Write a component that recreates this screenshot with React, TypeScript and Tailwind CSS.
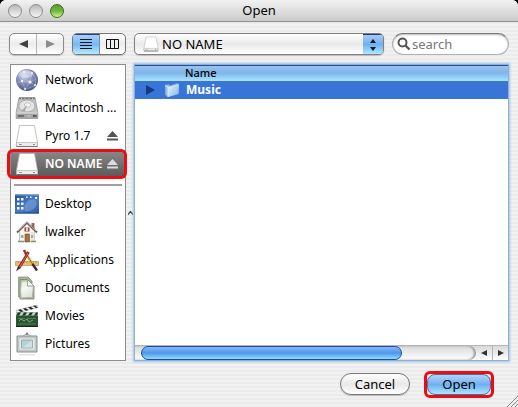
import { useState } from "react";
import type { ReactNode } from "react";

type Place = {
  name: string;
  icon: ReactNode;
  ejectable?: boolean;
};

const NetworkIcon = () => (
  <svg className="size-6 shrink-0" viewBox="0 0 24 24" aria-hidden="true">
    <defs>
      <radialGradient id="globe" cx="0.4" cy="0.3" r="0.8">
        <stop offset="0" stopColor="#c3cbe6" />
        <stop offset="0.45" stopColor="#8590b8" />
        <stop offset="1" stopColor="#3d4870" />
      </radialGradient>
    </defs>
    <circle cx="12" cy="12" r="11" fill="url(#globe)" />
    <g fill="none" stroke="#dfe5f8" strokeWidth="0.6" opacity="0.5">
      <path d="M3 7 L9 4 L17 5 L21 11 L15 14 L7 13 L3 7 L15 14 L17 5 M9 4 L7 13 L10 21 L15 14 L20 18 M7 13 L2 15 M21 11 L20 18 L10 21" />
    </g>
    <g fill="#ffffff" opacity="0.85">
      <circle cx="9" cy="4" r="1" />
      <circle cx="17" cy="5" r="1" />
      <circle cx="7" cy="13" r="1.2" />
      <circle cx="15" cy="14" r="1.6" />
      <circle cx="10" cy="21" r="1" />
      <circle cx="20" cy="17" r="1" />
    </g>
    <ellipse cx="11" cy="6" rx="7" ry="4" fill="#ffffff" opacity="0.4" />
  </svg>
);

const HardDiskIcon = () => (
  <svg className="size-6 shrink-0" viewBox="0 0 24 24" aria-hidden="true">
    <path d="M4 1.5 H20 L22.8 16 V22.5 H1.2 V16 Z" fill="#c4c4c4" stroke="#8c8c8c" strokeWidth="0.7" />
    <path d="M4.5 1.8 H19.5 L19.8 3.2 H4.2 Z" fill="#707070" />
    <path d="M6.5 2 V3.2 M10 2 V3.2 M14 2 V3.2 M17.5 2 V3.2" stroke="#cccccc" />
    <ellipse cx="12" cy="10" rx="8" ry="6" fill="#e4e4e4" stroke="#9c9c9c" strokeWidth="0.7" />
    <ellipse cx="12.5" cy="9" rx="3.2" ry="2.2" fill="#f5f5f5" stroke="#aaaaaa" strokeWidth="0.6" />
    <path d="M6 15 L12 9 L10 15.5 Z" fill="#acacac" />
    <path d="M1.2 16.5 H22.8 V22.5 H1.2 Z" fill="#a3a3a3" />
    <path d="M1.5 17 H22.5" stroke="#eeeeee" />
    <path d="M3 20 H9" stroke="#5d5d5d" strokeWidth="1.5" />
    <path d="M12 20 H16" stroke="#c9c9c9" />
    <path d="M18 19 H21.5 V21 H18 Z" fill="#5c5c5c" />
  </svg>
);

const DriveIcon = ({ className = "size-6" }: { className?: string }) => (
  <svg className={`${className} shrink-0`} viewBox="0 0 24 24" aria-hidden="true">
    <path d="M4.5 1.5 H19.5 L22.5 18.5 V22.5 H1.5 V18.5 Z" fill="#ffffff" stroke="#b4b4b4" strokeWidth="0.8" />
    <path d="M1.5 18.5 H22.5 V22.5 H1.5 Z" fill="#ededed" stroke="#aaaaaa" strokeWidth="0.6" />
    <path d="M1.5 22.5 H22.5" stroke="#777777" />
    <path d="M4 20.5 H7" stroke="#999999" />
    <path d="M18 20.5 H20" stroke="#888888" />
  </svg>
);

const DesktopIcon = () => (
  <svg className="size-6 shrink-0" viewBox="0 0 24 24" aria-hidden="true">
    <defs>
      <linearGradient id="desk" x1="0" y1="0" x2="1" y2="1">
        <stop offset="0" stopColor="#244f9c" />
        <stop offset="0.55" stopColor="#4d7fc0" />
        <stop offset="1" stopColor="#2c5aa4" />
      </linearGradient>
    </defs>
    <path d="M0 2.5 H24 V21.5 H0 Z" fill="url(#desk)" />
    <path d="M10 18 C8 11 14 6 20 8 C23 10 22 16 17 18 C14 19 11 20 10 18 Z" fill="#7ba4d8" opacity="0.55" />
    <path d="M0 3 H24" stroke="#6f93c8" />
    <path d="M0 21 H24" stroke="#234785" />
    <path
      d="M2 6h2.500v2.500H2z M6 6h2.500v2.500H6z M2 10.500h2.500v2.500H2z M6 10.500h2.500v2.500H6z M2 15h2.500v2.500H2z M6 15h2.500v2.500H6z M11 4.500h1.500v1.500h-1.500z M15 4.500h1.500v1.500h-1.500z M20 5h2v2h-2z"
      fill="#edf4ff"
    />
  </svg>
);

const HomeIcon = () => (
  <svg className="size-6 shrink-0" viewBox="0 0 24 24" aria-hidden="true">
    <path d="M16.5 3 H19.5 V10 H16.5 Z" fill="#a2644f" />
    <path d="M4.5 11 L12 4 L19.5 11 V21.5 H4.5 Z" fill="#faf7f0" stroke="#b3a999" strokeWidth="0.7" />
    <path d="M15.5 12 H19.5 V21.5 H15.5 Z" fill="#ebe4d8" />
    <path d="M2 12.5 L12 2.5 L22 12.5" fill="none" stroke="#6d625b" strokeWidth="1.8" />
    <path d="M3 11 L12 2 L21 11" fill="none" stroke="#c9bfb2" strokeWidth="0.7" />
    <path d="M9.5 7.5 H14.5 V11.5 H9.5 Z" fill="#a83a32" />
    <path d="M11 8 H13 V11 H11 Z" fill="#d9dce6" />
    <path d="M10 14 H14.5 V22 H10 Z" fill="#a07545" stroke="#765331" strokeWidth="0.6" />
    <path d="M5.8 15 H8.5 V18 H5.8 Z M16 15 H18.2 V18 H16 Z" fill="#a5a7ae" />
    <path d="M3 21.5 H9 M16 21.5 H21" stroke="#7d946c" strokeWidth="1.3" />
  </svg>
);

const ApplicationsIcon = () => (
  <svg className="size-6 shrink-0" viewBox="0 0 24 24" aria-hidden="true">
    <path d="M0.5 13.5 H23.5 V17.5 H0.5 Z" fill="#e2bd78" stroke="#b18a4c" strokeWidth="0.6" />
    <path d="M3 13.5 V15 M6 13.5 V15 M9 13.5 V15 M12 13.5 V15 M15 13.5 V15 M18 13.5 V15 M21 13.5 V15" stroke="#93703c" strokeWidth="0.6" />
    <path d="M9 2 L11.500 7" stroke="#b52f2a" strokeWidth="2.6" />
    <path d="M11 6.500 L19 18" stroke="#e3b23c" strokeWidth="2.4" />
    <path d="M12 7 L19.5 19" stroke="#a3522b" strokeWidth="0.8" />
    <path d="M17.5 16 L22 22.5" stroke="#35302d" strokeWidth="2.4" />
    <path d="M13.5 4 L4 20" stroke="#8c2721" strokeWidth="2.8" />
    <path d="M13 5 L4.5 19.5" stroke="#dd6656" />
    <path d="M3 18 L1 23.5 L5.5 20 Z" fill="#493228" />
  </svg>
);

const DocumentsIcon = () => (
  <svg className="size-6 shrink-0" viewBox="0 0 24 24" aria-hidden="true">
    <defs>
      <linearGradient id="doc" x1="0" y1="0" x2="0.4" y2="1">
        <stop offset="0" stopColor="#a5b891" />
        <stop offset="0.5" stopColor="#edf0ea" />
        <stop offset="1" stopColor="#a9b59e" />
      </linearGradient>
    </defs>
    <path d="M3.5 1 H13 L17 5 V21 H3.5 Z" fill="#a5b790" stroke="#88967c" strokeWidth="0.8" />
    <path d="M5 3.5 H12.5 L19 10 V23 H5 Z" fill="url(#doc)" stroke="#7f8978" strokeWidth="0.9" />
    <path d="M7 6 H12 V11 H17 V21 H7 Z" fill="#ffffff" opacity="0.6" />
    <path d="M12.5 3.5 V10 H19 Z" fill="#fdfdfd" stroke="#8a9483" strokeWidth="0.8" />
  </svg>
);

const MoviesIcon = () => (
  <svg className="size-6 shrink-0" viewBox="0 0 24 24" aria-hidden="true">
    <path d="M1 6.5 L22 1 L23 3.5 L2 9 Z" fill="#f3f3f3" stroke="#777777" strokeWidth="0.4" />
    <path d="M3 6 L6 8 L8.500 7.300 L5.500 5.300 Z M8 4.700 L11 6.700 L13.500 6 L10.500 4 Z M13 3.400 L16 5.400 L18.500 4.700 L15.500 2.700 Z M18 2.100 L21 4 L23 3.500 L20 1.500 Z" fill="#222222" />
    <path d="M1 8.5 H23 V23 H1 Z" fill="#285330" />
    <path d="M1 8.5 H23 V11.5 H1 Z" fill="#c9d8c6" />
    <path d="M3 8.5 H6 L4 11.5 H1 Z M9 8.5 H12 L10 11.5 H7 Z M15 8.5 H18 L16 11.5 H13 Z M21 8.5 H23 L22 11.5 H19 Z" fill="#17331b" />
    <path d="M3 14.5 H10 M12 14.5 H21 M3 20 H21" stroke="#5d8a58" strokeWidth="0.8" />
    <path d="M4 17 L6 15 L9 17 L12 15 L14 18 L18 16" fill="none" stroke="#8fb083" strokeWidth="0.9" />
    <path d="M1 22.5 H23" stroke="#0d2a12" />
  </svg>
);

const PicturesIcon = () => (
  <svg className="size-6 shrink-0" viewBox="0 0 24 24" aria-hidden="true">
    <path d="M8 4 L12 1.5 L16 4" fill="none" stroke="#aaaaaa" />
    <circle cx="12" cy="1.8" r="1.2" fill="#808080" />
    <path d="M2 4 H22 V20 H2 Z" fill="#c9cccb" stroke="#8a8e8d" />
    <path d="M4 6 H20 V18 H4 Z" fill="#e9ebea" stroke="#b2b5b4" strokeWidth="0.6" />
    <path d="M6.5 8 H17.5 V16 H6.5 Z" fill="#b3d3d7" stroke="#869fa2" strokeWidth="0.8" />
    <path d="M7 15.5 L17 8.5 V15.5 Z" fill="#cbe3e5" />
    <path d="M4 22.8 H20" stroke="#d8d8d8" />
  </svg>
);

const FolderIcon = () => (
  <svg className="size-4 shrink-0" viewBox="0 0 16 16" aria-hidden="true">
    <defs>
      <linearGradient id="folder" x1="0" y1="0" x2="1" y2="1">
        <stop offset="0" stopColor="#eaf6ff" />
        <stop offset="1" stopColor="#7eb4e4" />
      </linearGradient>
    </defs>
    <path d="M1 3 L5 2 L6 3.5 L13 1 L15 2 V12 L4 15 L1 13 Z" fill="#8dbce6" stroke="#507fb4" strokeWidth="0.6" />
    <path d="M4 5 L15 2 L14 12 L4 15 Z" fill="url(#folder)" />
    <path d="M1 3.5 L4 5 V15" fill="none" stroke="#e8f5ff" strokeWidth="0.8" />
  </svg>
);

const EjectIcon = () => (
  <svg className="h-[10px] w-[11px]" viewBox="0 0 11 10" fill="currentColor" aria-hidden="true">
    <path d="M5.5 0 L11 6 H0 Z M0 7.5 H11 V9.5 H0 Z" />
  </svg>
);

const volumes: Place[] = [
  { name: "Network", icon: <NetworkIcon /> },
  { name: "Macintosh ...", icon: <HardDiskIcon /> },
  { name: "Pyro 1.7", icon: <DriveIcon />, ejectable: true },
  { name: "NO NAME", icon: <DriveIcon />, ejectable: true },
];

const folders: Place[] = [
  { name: "Desktop", icon: <DesktopIcon /> },
  { name: "lwalker", icon: <HomeIcon /> },
  { name: "Applications", icon: <ApplicationsIcon /> },
  { name: "Documents", icon: <DocumentsIcon /> },
  { name: "Movies", icon: <MoviesIcon /> },
  { name: "Pictures", icon: <PicturesIcon /> },
];

type PlaceRowProps = {
  place: Place;
  selected: boolean;
  onSelect: (name: string) => void;
};

const PlaceRow = ({ place, selected, onSelect }: PlaceRowProps) => (
  <li
    className={
      selected
        ? "relative flex h-7 items-center bg-linear-to-b from-[#8a8a8a] to-[#585858] font-semibold text-white"
        : "relative flex h-7 items-center text-black"
    }
  >
    <button
      type="button"
      onClick={() => onSelect(place.name)}
      className="flex min-w-0 flex-1 items-center gap-[6px] pl-1 text-left whitespace-nowrap"
    >
      {place.icon}
      {place.name}
    </button>
    {place.ejectable && (
      <button
        type="button"
        aria-label={`Eject ${place.name}`}
        className={selected ? "absolute right-[7px] text-[#dddddd]" : "absolute right-[7px] text-[#555555]"}
      >
        <EjectIcon />
      </button>
    )}
    {selected && <span className="pointer-events-none absolute -inset-y-px -right-[2px] -left-1 rounded-md border-3 border-[#ec0c14]" />}
  </li>
);

const TitleBar = () => (
  <header className="relative flex h-[22px] shrink-0 items-center justify-center border-b border-[#8e8e8e] bg-linear-to-b from-[#f2f2f2] to-[#cbcbcb]">
    <div className="absolute left-2 flex gap-[7px]">
      <button type="button" aria-label="Close" className="size-[14px] rounded-full border border-[#8c8c8c] bg-linear-to-b from-[#b9b9b9] to-[#f6f6f6]" />
      <button type="button" aria-label="Minimize" className="size-[14px] rounded-full border border-[#8c8c8c] bg-linear-to-b from-[#b9b9b9] to-[#f6f6f6]" />
      <button type="button" aria-label="Zoom" className="size-[14px] rounded-full border border-[#3d6a20] bg-linear-to-b from-[#5d9a34] via-[#71b83a] to-[#c9f58c]" />
    </div>
    <h1 className="text-[13px]">Open</h1>
  </header>
);

const Toolbar = () => (
  <div className="flex h-[22px] shrink-0 items-stretch gap-2">
    <div className="flex w-[55px] rounded-[5px] border border-[#8b8b8b] bg-linear-to-b from-white via-[#ececec] to-white shadow-[0_1px_1px_#bbbbbb]">
      <button type="button" aria-label="Back" className="flex flex-1 items-center justify-center border-r border-[#b5b5b5]">
        <svg className="h-2 w-[9px]" viewBox="0 0 9 8" aria-hidden="true">
          <path d="M0 4 L9 0 V8 Z" fill="#404040" />
        </svg>
      </button>
      <button type="button" aria-label="Forward" className="flex flex-1 items-center justify-center">
        <svg className="h-2 w-[9px]" viewBox="0 0 9 8" aria-hidden="true">
          <path d="M9 4 L0 0 V8 Z" fill="#8c8c8c" />
        </svg>
      </button>
    </div>
    <div className="flex w-[54px] overflow-hidden rounded-[5px] border border-[#777777] bg-linear-to-b from-white via-[#ececec] to-white shadow-[0_1px_1px_#bbbbbb]">
      <button type="button" aria-label="List view" className="flex flex-1 items-center justify-center border-t border-r border-t-[#2c3b85] border-r-[#6f8fb8] bg-linear-to-b from-[#a8cdf5] via-[#7bb9f3] to-[#b6ecff]">
        <svg className="h-[11px] w-3" viewBox="0 0 12 11" aria-hidden="true">
          <path d="M0 0.5 H12 M0 3.5 H12 M0 6.5 H12 M0 9.5 H12" stroke="#101828" />
        </svg>
      </button>
      <button type="button" aria-label="Column view" className="flex flex-1 items-center justify-center">
        <svg className="h-[11px] w-[13px]" viewBox="0 0 13 11" aria-hidden="true">
          <path d="M0.5 0.5 H12.5 V9.5 H0.5 Z M4.5 0.5 V9.5 M8.5 0.5 V9.5" fill="none" stroke="#111111" />
        </svg>
      </button>
    </div>
    <div className="relative flex min-w-0 flex-1 overflow-hidden rounded-[5px] border border-[#808080] bg-linear-to-b from-white via-[#e9e9e9] to-white shadow-[0_1px_1px_#bbbbbb]">
      <DriveIcon className="pointer-events-none absolute top-[2px] left-2 size-4" />
      <select aria-label="Location" className="w-full appearance-none bg-transparent pl-[27px] text-[13px] leading-5 outline-none">
        <option>NO NAME</option>
        <option>Pyro 1.7</option>
        <option>Network</option>
      </select>
      <span className="pointer-events-none absolute inset-y-0 right-0 flex w-5 items-center justify-center border-t border-t-[#263377] bg-linear-to-b from-[#a5c9f3] via-[#6fb0f0] to-[#aee9ff]">
        <svg className="h-3 w-[6px]" viewBox="0 0 6 12" aria-hidden="true">
          <path d="M3 0 L6 4 H0 Z M3 12 L6 8 H0 Z" fill="#101828" />
        </svg>
      </span>
    </div>
    <div className="relative w-[117px]">
      <svg className="pointer-events-none absolute top-1 left-[5px] size-[14px]" viewBox="0 0 14 14" aria-hidden="true">
        <circle cx="5.5" cy="5.5" r="4" fill="none" stroke="#555555" strokeWidth="2" />
        <path d="M8.5 8.5 L12.5 12.5" stroke="#555555" strokeWidth="2.4" />
      </svg>
      <input
        type="search"
        aria-label="Search"
        placeholder="search"
        className="h-full w-full rounded-full border border-[#b0b0b0] border-t-[#777777] bg-white pl-[19px] text-[13px] shadow-[inset_0_1px_2px_#bbbbbb] outline-none placeholder:text-[#777777]"
      />
    </div>
  </div>
);

const FileList = () => (
  <section className="flex min-w-0 flex-1 flex-col border border-[#8fb1d6] bg-white shadow-[0_0_2px_1px_#9fc3e8]">
    <table className="w-full border-collapse">
      <thead>
        <tr className="h-4 bg-linear-to-b from-[#a0c5ee] via-[#7db4ea] to-[#a9e6ff] shadow-[inset_0_1px_0_#1f4f9c]">
          <th className="p-0 pl-[50px] text-left text-[11px] leading-4 font-medium">Name</th>
        </tr>
      </thead>
      <tbody>
        <tr className="bg-[#3875d7] text-white">
          <td className="p-0">
            <div className="flex h-[18px] items-center pl-[11px]">
              <button type="button" aria-label="Expand Music" className="mr-[9px]">
                <svg className="h-[10px] w-[9px]" viewBox="0 0 9 10" aria-hidden="true">
                  <path d="M0 0 L9 5 L0 10 Z" fill="#143a80" />
                </svg>
              </button>
              <FolderIcon />
              <span className="ml-[6px] text-[12px] font-bold">Music</span>
            </div>
          </td>
        </tr>
      </tbody>
    </table>
    <div className="mt-auto flex h-[15px] border-t border-[#b5b5b5] bg-linear-to-b from-[#d9d9d9] to-white">
      <div className="flex-1 rounded-r-full pl-[6px] shadow-[inset_-2px_0_2px_#999999]">
        <div className="h-[14px] w-[78%] rounded-full border border-[#1c4c9e] bg-linear-to-b from-[#86b8f5] via-[#4f96ea] to-[#8fdcff]" />
      </div>
      <button type="button" aria-label="Scroll left" className="flex w-4 items-center justify-center">
        <svg className="size-[6px]" viewBox="0 0 6 6" aria-hidden="true">
          <path d="M0 3 L6 0 V6 Z" fill="#333333" />
        </svg>
      </button>
      <button type="button" aria-label="Scroll right" className="flex w-4 items-center justify-center border-l border-[#b5b5b5]">
        <svg className="size-[6px]" viewBox="0 0 6 6" aria-hidden="true">
          <path d="M6 3 L0 0 V6 Z" fill="#333333" />
        </svg>
      </button>
    </div>
  </section>
);

const App: React.FC = () => {
  const [selected, setSelected] = useState("NO NAME");

  return (
    <div className="bg-black">
      <main className="relative flex min-h-screen flex-col overflow-hidden rounded-t-md bg-[repeating-linear-gradient(#f1f1f1_0_2px,#ebebeb_2px_4px)] font-['Noto_Sans','Open_Sans',sans-serif] text-[12px] text-black">
        <TitleBar />
        <div className="flex flex-1 flex-col px-[9px] pt-[11px]">
          <Toolbar />
          <div className="mt-[9px] flex flex-1">
            <nav aria-label="Places" className="ml-px w-[116px] shrink-0 border border-[#8c8c8c] bg-white py-px">
              <ul>
                {volumes.map((place) => (
                  <PlaceRow key={place.name} place={place} selected={selected === place.name} onSelect={setSelected} />
                ))}
              </ul>
              <hr className="mx-[3px] mt-[6px] mb-1 border-t-2 border-[#a0a0a0]" />
              <ul>
                {folders.map((place) => (
                  <PlaceRow key={place.name} place={place} selected={selected === place.name} onSelect={setSelected} />
                ))}
              </ul>
            </nav>
            <div className="flex w-2 shrink-0 items-center justify-center">
              <svg className="h-1 w-[5px]" viewBox="0 0 5 4" aria-hidden="true">
                <path d="M0 3.5 L2.5 0.5 L5 3.5" fill="none" stroke="#444444" strokeWidth="1.3" />
              </svg>
            </div>
            <FileList />
          </div>
          {/* Dialog actions */}
          <footer className="flex h-[46px] shrink-0 items-center justify-end gap-[14px] pr-[15px]">
            <button type="button" className="h-[22px] w-[70px] rounded-full border border-[#777777] bg-linear-to-b from-white via-[#e9e9e9] to-white text-[13px] leading-5 shadow-[0_1px_1px_#bbbbbb]">
              Cancel
            </button>
            <span className="flex rounded-md border-3 border-[#ec0c14]">
              <button type="button" className="h-[21px] w-16 rounded-lg border border-[#4a6aa8] bg-linear-to-b from-[#b4d3f7] via-[#6fb0f0] to-[#a9e6ff] text-[13px] leading-[19px]">
                Open
              </button>
            </span>
          </footer>
        </div>
        <svg className="pointer-events-none absolute right-0 bottom-0 size-3" viewBox="0 0 12 12" aria-hidden="true">
          <path d="M1 12 L12 1 M5 12 L12 5 M9 12 L12 9" stroke="#888888" />
        </svg>
      </main>
    </div>
  );
};

export default App;
